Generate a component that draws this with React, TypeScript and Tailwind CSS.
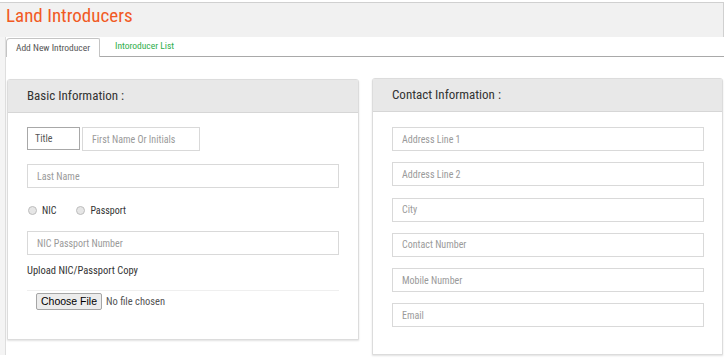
import React from "react";

const roboto = { fontFamily: "'Roboto Condensed', Roboto, 'Liberation Sans', sans-serif" };

function Field({ placeholder, className = "" }: { placeholder: string; className?: string }) {
  return (
    <div
      className={`flex h-[24px] items-center border border-[#d9d9d9] bg-white pl-[9px] text-[10px] text-[#9a9a9a] ${className}`}
    >
      {placeholder}
    </div>
  );
}

function Radio({ label }: { label: string }) {
  return (
    <label className="flex items-center gap-[5px] text-[10px] text-[#333]">
      <span className="h-[9px] w-[9px] rounded-full border border-[#bdbdbd] bg-[#e6e6e6]" />
      {label}
    </label>
  );
}

function Card({ title, className = "", children }: { title: string; className?: string; children: React.ReactNode }) {
  return (
    <section
      className={`rounded-t-[3px] border border-[#dcdcdc] bg-white shadow-[0_1px_2px_rgba(0,0,0,0.12)] ${className}`}
    >
      <header className="flex h-[33px] items-center border-b border-[#d6d6d6] bg-[#e8e8e8] pl-[19px] text-[13px] text-[#333]">
        {title}
      </header>
      {children}
    </section>
  );
}

export default function App() {
  return (
    <div className="h-[363px] w-[726px] overflow-hidden bg-white" style={roboto}>
      {/* title band */}
      <div className="mt-[2px] mr-[2px] flex h-[35px] items-start border-t border-r border-[#d0d0d0] bg-[#f1f1f1] pl-[6px] pt-[1px]">
        <h1 className="text-[19px] leading-[24px] text-[#f15a24]">Land Introducers</h1>
      </div>

      <div className="flex">
        <div className="w-[6px] shrink-0 border-r border-[#dedede] bg-[#f4f4f4]" />
        <div className="flex-1">
          {/* tabs */}
          <div className="mt-[1px] mr-[2px] flex h-[19px] items-end border-b border-[#a9a9a9]">
            <div className="-mb-px flex h-[19px] w-[94px] items-center justify-center rounded-tl-[4px] rounded-tr-[2px] border border-b-0 border-[#c4c4c4] bg-white text-[9.5px] text-[#555]">
              Add New Introducer
            </div>
            <div className="flex h-[19px] items-center pl-[15px] text-[9.5px] text-[#2eae4a]">
              Intoroducer List
            </div>
          </div>

          {/* content */}
          <div className="flex items-start gap-[13px] pl-[1px] pt-[22px]">
            <Card title="Basic Information :" className="w-[352px]">
              <div className="px-[19px] pt-[14px] pb-[28px]">
                <div className="flex gap-[2px]">
                  <div className="h-[23px] w-[53px] border border-[#a8a8a8] pl-[7px] pt-[3px] text-[10px] text-[#555]">
                    Title
                  </div>
                  <Field placeholder="First Name Or Initials" className="w-[118px]" />
                </div>
                <Field placeholder="Last Name" className="mt-[13px] w-[312px]" />
                <div className="mt-[15px] flex gap-[20px] pl-[1px]">
                  <Radio label="NIC" />
                  <Radio label="Passport" />
                </div>
                <Field placeholder="NIC Passport Number" className="mt-[13px] w-[312px]" />
                <p className="mt-[8px] text-[10.5px] text-[#333]">Upload NIC/Passport Copy</p>
                <div className="mt-[11px] flex h-[21px] w-[312px] items-start border-t border-[#efefef] pt-[2px] pl-[9px]">
                  <button
                    className="h-[17px] rounded-[2px] border border-[#a6a6a6] bg-[#ececec] px-[4px] text-[10.5px] leading-none text-black"
                    style={{ fontFamily: "'Liberation Sans', Arial, sans-serif" }}
                  >
                    Choose File
                  </button>
                  <span className="ml-[4px] text-[10.5px] leading-[17px] text-[#555]">No file chosen</span>
                </div>
              </div>
            </Card>

            <Card title="Contact Information :" className="-mt-[1px] w-[351px]">
              <div className="flex flex-col gap-[11.3px] px-[19px] pt-[15px] pb-[27px]">
                <Field placeholder="Address Line 1" className="w-[312px]" />
                <Field placeholder="Address Line 2" className="w-[312px]" />
                <Field placeholder="City" className="w-[312px]" />
                <Field placeholder="Contact Number" className="w-[312px]" />
                <Field placeholder="Mobile Number" className="w-[312px]" />
                <Field placeholder="Email" className="w-[312px]" />
              </div>
            </Card>
          </div>
        </div>
      </div>
    </div>
  );
}
